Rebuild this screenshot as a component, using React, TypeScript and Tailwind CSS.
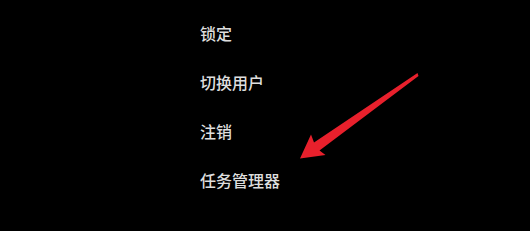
const items = ['锁定', '切换用户', '注销', '任务管理器']

export default function App() {
  return (
    <div className="relative h-[231px] w-[530px] overflow-hidden bg-black">
      {/* Ctrl+Alt+Del menu */}
      <ul
        className="flex flex-col gap-[29px] pl-[200px] pt-[23px] text-[16px] font-medium leading-[20px] text-[#dedede]"
        style={{ fontFamily: '"Noto Sans CJK SC", "Noto Sans", sans-serif' }}
      >
        {items.map((item) => (
          <li key={item}>{item}</li>
        ))}
      </ul>

      {/* red annotation arrow */}
      <svg className="absolute left-0 top-0" width="530" height="231" viewBox="0 0 530 231">
        <polygon
          points="300,158.5 311,134.5 314,142.5 417.5,73 418.5,76 319.5,150.5 325.5,155"
          fill="#e8202c"
        />
      </svg>
    </div>
  )
}
